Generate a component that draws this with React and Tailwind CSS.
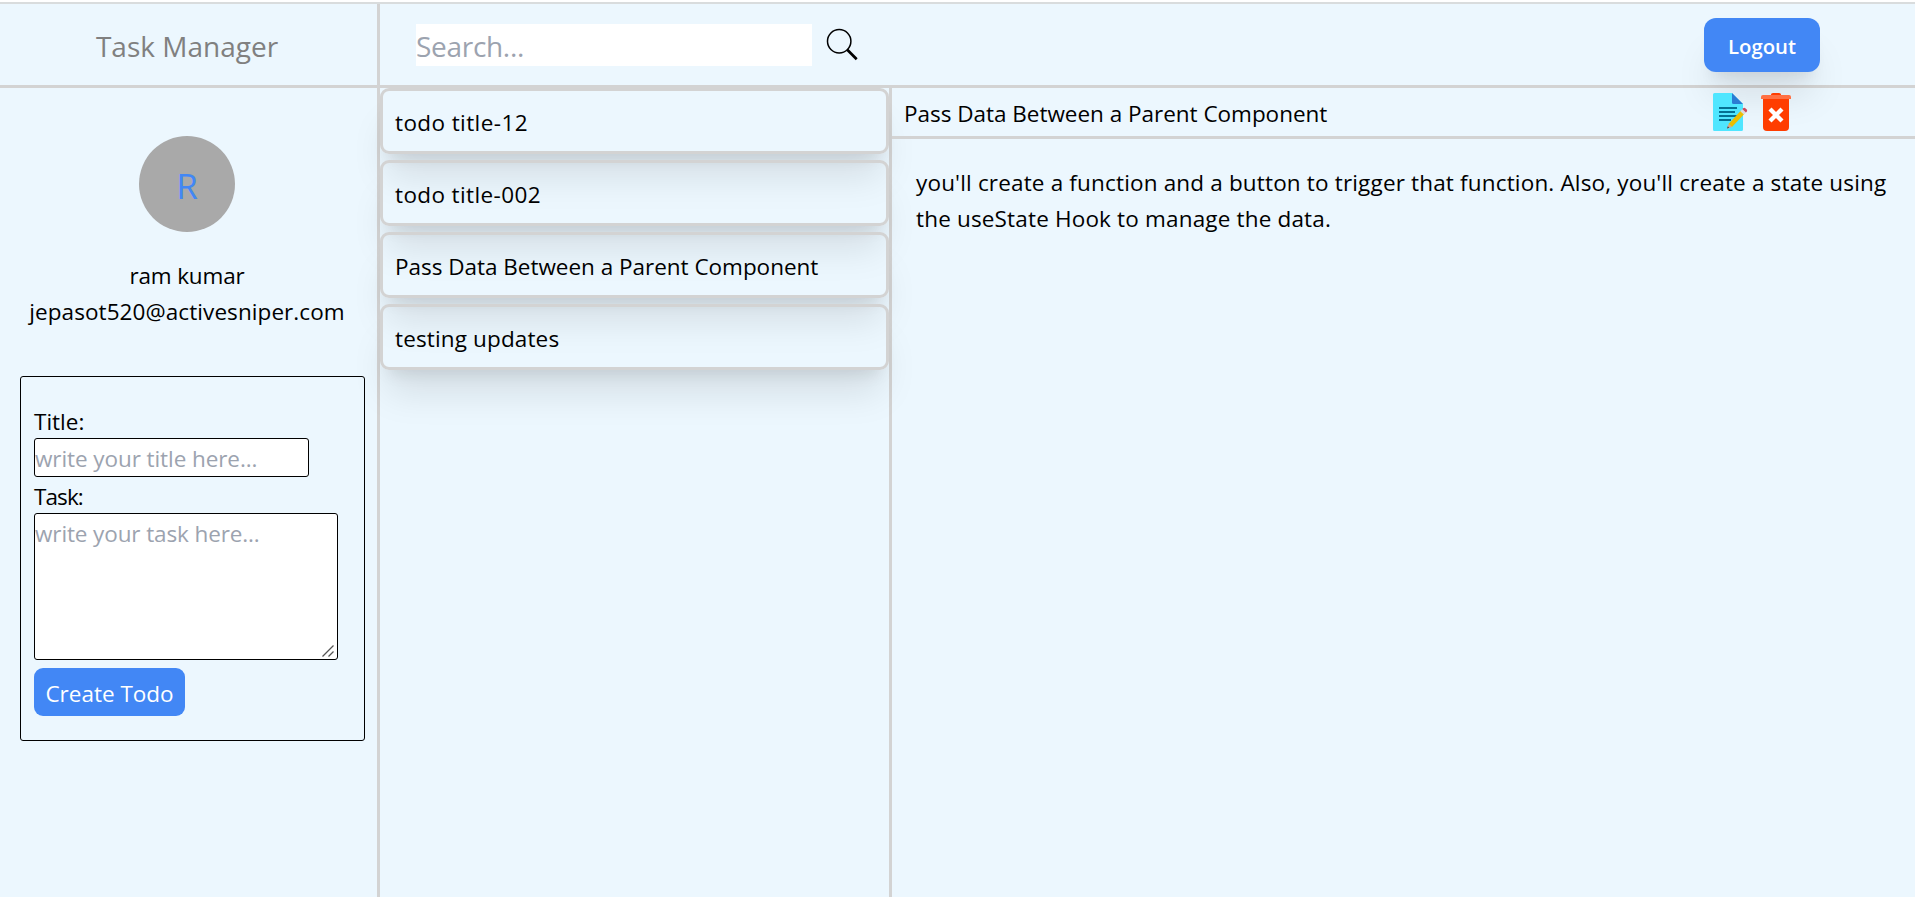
const todos = [
  { title: "todo title-12", tracking: "tracking-[0.4px]" },
  { title: "todo title-002", tracking: "tracking-[0.38px]" },
  { title: "Pass Data Between a Parent Component", tracking: "tracking-[-0.02px]" },
  { title: "testing updates", tracking: "tracking-[0.14px]" },
];

function SearchIcon() {
  return (
    <svg className="ml-[14px] h-[38px] w-[36px]" viewBox="0 0 36 38" fill="none" stroke="#000">
      <circle cx="13.2" cy="17.300" r="11.700" strokeWidth="1.5" />
      <path d="M21.300 25.800 30.700 35.200" strokeWidth="2.700" />
    </svg>
  );
}

function EditIcon() {
  return (
    <svg className="h-[38px] w-[35px]" viewBox="0 0 35 38">
      <path d="M1.5 0H19l11 11v25.500a1.500 1.500 0 0 1-1.500 1.500h-27A1.500 1.500 0 0 1 0 36.500v-35A1.500 1.500 0 0 1 1.500 0Z" fill="#50e6ff" />
      <path d="M19 0l11 11H20.500A1.500 1.500 0 0 1 19 9.500Z" fill="#2b7cd3" />
      <path d="M6 15h18M6 19h16M6 23h18M6 27h12" stroke="#057092" strokeWidth="2" />
      <path d="M15.500 31 28 17.500l3.500 3.300L19 34Z" fill="#edbe00" />
      <path d="M15.500 31 14 35.500 19 34Z" fill="#dea38c" />
      <path d="M14 35.500l.8-2.200 1.500 1.500Z" fill="#454242" />
      <path d="m27.300 18.200 2-2.200 3.600 3.400-2.100 2.200Z" fill="#d9dbde" />
      <path d="m29.300 16 .8-.8a1.700 1.700 0 0 1 2.300 0l1.300 1.200a1.700 1.700 0 0 1 0 2.300l-.8.700Z" fill="#cc4a5c" />
    </svg>
  );
}

function TrashIcon() {
  return (
    <svg className="h-[38px] w-[30px]" viewBox="0 0 30 38">
      <path d="M10 2V1.500Q10 0 12 0h6q2 0 2 1.500V2Z" fill="#ff3d00" />
      <path d="M2 6h26v28a4 4 0 0 1-4 4H6a4 4 0 0 1-4-4Z" fill="#ff3d00" />
      <path d="M0 6V4a2 2 0 0 1 2-2h26a2 2 0 0 1 2 2v2Z" fill="#ff7043" />
      <path d="m9 16 12 12M21 16 9 28" stroke="#fff" strokeWidth="4.300" />
    </svg>
  );
}

export default function App() {
  return (
    <div className="flex h-[897px] w-full flex-col overflow-hidden bg-[#ecf7fe] font-['Open_Sans','Noto_Sans',sans-serif] text-[22.5px] leading-[36px] text-black">
      <div className="h-[4px] shrink-0 border-b-2 border-[#d9dcdd] bg-white" />
      <header className="flex h-[84px] shrink-0 border-b-3 border-[#d3d3d3]">
        <div className="flex w-[380px] shrink-0 items-center justify-center border-r-3 border-[#d3d3d3] pt-[2px] pr-[3px] text-[28px] leading-[42px] text-[#808080]">
          <h1>Task Manager</h1>
        </div>
        <div className="flex items-start pt-[20px] pl-[36px]">
          <input placeholder="Search..." className="h-[42px] w-[396px] bg-white pt-[2px] text-[28px] leading-[40px] tracking-[-0.3px] placeholder:text-[#9ca3af]" />
          <SearchIcon />
        </div>
        <div className="flex flex-1 justify-end pt-[14px] pr-[95px]">
          <button className="h-[54px] w-[116px] rounded-[12px] bg-[#4287f5] pt-[2px] text-[20.3px] font-semibold text-white shadow-[0_30px_37.500px_-7.500px_rgba(0,0,0,0.1),0_12px_15px_-9px_rgba(0,0,0,0.1)]">
            Logout
          </button>
        </div>
      </header>
      <main className="flex flex-1">
        <aside className="flex w-[380px] shrink-0 flex-col border-r-3 border-[#d3d3d3]">
          <div className="flex flex-col items-center pt-[48px] pr-[3px]">
            <div className="flex h-[96px] w-[96px] items-center justify-center rounded-full bg-[#a9a9a9] pt-[3px] text-[35px] text-[#4287f5]">R</div>
            <p className="mt-[26px] tracking-[-0.15px]">ram kumar</p>
            <p className="tracking-[0.08px]">jepasot520@activesniper.com</p>
          </div>
          <form className="mt-[46px] ml-[20px] flex h-[365px] w-[345px] flex-col items-start rounded-[3px] border border-black pt-[27px] pl-[13px]">
            <label>Title:</label>
            <input placeholder="write your title here..." className="-mt-[2px] h-[39px] w-[275px] rounded-[3px] border border-black bg-white pt-[2px] tracking-[-0.08px] placeholder:text-[#9ca3af]" />
            <label className="pt-[2px] -mb-[2px] tracking-[-0.9px]">Task:</label>
            <div className="relative">
              <textarea placeholder="write your task here..." className="block h-[147px] w-[304px] resize-none rounded-[3px] border border-black bg-white pt-[2px] tracking-[-0.12px] placeholder:text-[#9ca3af]" />
              <svg className="absolute right-[4px] bottom-[3px] h-[12px] w-[12px]" viewBox="0 0 12 12" stroke="#555" strokeWidth="1.300">
                <path d="M.5 11.500 11.500.5M6.500 11.500l5-5" />
              </svg>
            </div>
            <button type="button" className="mt-[8px] h-[48px] w-[151px] rounded-[9px] bg-[#4287f5] pt-[3px] text-white">Create Todo</button>
          </form>
        </aside>
        <section className="flex w-[512px] shrink-0 flex-col gap-[6px] border-r-3 border-[#d3d3d3]">
          {todos.map(({ title, tracking }) => (
            <div
              key={title}
              className={`h-[66px] rounded-[9px] border-3 border-[#d3d3d3] pt-[14px] pl-[12px] shadow-[0_30px_37.500px_-7.500px_rgba(0,0,0,0.1),0_12px_15px_-9px_rgba(0,0,0,0.1)] ${tracking}`}
            >
              {title}
            </div>
          ))}
        </section>
        <section className="flex-1">
          <div className="flex h-[51px] justify-between border-b-3 border-[#d3d3d3] pr-[124px] pl-[12px]">
            <h2 className="pt-[8px] tracking-[-0.02px]">Pass Data Between a Parent Component</h2>
            <div className="flex gap-[13px] pt-[5px]">
              <EditIcon />
              <TrashIcon />
            </div>
          </div>
          <p className="pt-[26px] pl-[24px] tracking-[0.165px]">
            you'll create a function and a button to trigger that function. Also, you'll create a state using
            <br />
            the useState Hook to manage the data.
          </p>
        </section>
      </main>
    </div>
  );
}
